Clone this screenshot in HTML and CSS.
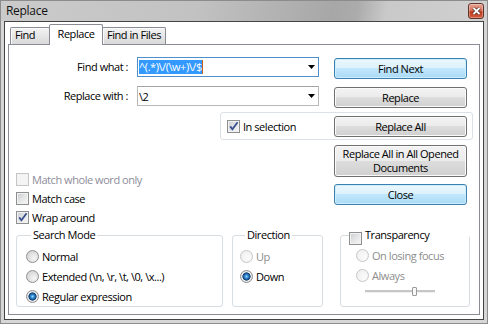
FILE: index.html
```html
<!DOCTYPE html>
<html lang="en">

<head>
    <meta charset="UTF-8">
    <meta name="viewport" content="width=device-width, initial-scale=1.0">
    <title>Replace</title>
    <link rel="stylesheet" href="styles.css">
</head>

<body>
    <div class="window">
        <header class="titlebar">
            <span class="title">Replace</span>
            <span class="close-btn">
                <svg width="9" height="8" viewBox="0 0 9 8">
                    <path d="M1.5 1 L7.5 7 M7.5 1 L1.5 7" stroke="#4a2a24" stroke-width="3.2" fill="none" />
                    <path d="M1.5 1 L7.5 7 M7.5 1 L1.5 7" stroke="#ffffff" stroke-width="1.8" fill="none" />
                </svg>
            </span>
        </header>

        <div class="client">
            <nav class="tabs">
                <span class="tab tab-find">Find</span>
                <span class="tab tab-replace active">Replace</span>
                <span class="tab tab-files">Find in Files</span>
            </nav>

            <section class="panel">
                <div class="top-grid">
                    <label class="field-label lbl-find">Find what :</label>
                    <div class="combo focused combo-find">
                        <span class="combo-text"><span class="selected-text">^(.*)\/(\w+)\/$</span><span class="caret"></span></span>
                        <span class="arrow"><svg width="7" height="4" viewBox="0 0 7 4"><path d="M0 0 H7 L3.5 4 Z" fill="#000" /></svg></span>
                    </div>
                    <button class="btn default btn-findnext">Find Next</button>

                    <label class="field-label lbl-replace">Replace with :</label>
                    <div class="combo combo-replace">
                        <span class="combo-text">\2</span>
                        <span class="arrow"><svg width="7" height="4" viewBox="0 0 7 4"><path d="M0 0 H7 L3.5 4 Z" fill="#000" /></svg></span>
                    </div>
                    <button class="btn btn-replace">Replace</button>

                    <div class="sel-box">
                        <label class="check">
                            <span class="cb checked"><svg width="13" height="13" viewBox="0 0 13 13"><path d="M3.2 6.4 L5.4 9.2 L10.6 2.2" stroke="#3b4f8f" stroke-width="1.8" fill="none" /></svg></span>
                            In selection
                        </label>
                        <button class="btn btn-replace-all">Replace All</button>
                    </div>

                    <button class="btn btn-all-docs">Replace All in All Opened Documents</button>
                    <button class="btn default btn-close">Close</button>

                    <div class="options">
                        <label class="check disabled"><span class="cb"></span>Match whole word only</label>
                        <label class="check"><span class="cb"></span>Match case</label>
                        <label class="check">
                            <span class="cb checked"><svg width="13" height="13" viewBox="0 0 13 13"><path d="M3.2 6.4 L5.4 9.2 L10.6 2.2" stroke="#3b4f8f" stroke-width="1.8" fill="none" /></svg></span>
                            Wrap around
                        </label>
                    </div>
                </div>

                <div class="groups">
                    <fieldset class="group search-mode">
                        <legend>Search Mode</legend>
                        <label class="radio"><span class="rb"></span>Normal</label>
                        <label class="radio"><span class="rb"></span>Extended (\n, \r, \t, \0, \x...)</label>
                        <label class="radio"><span class="rb on"></span>Regular expression</label>
                    </fieldset>

                    <fieldset class="group direction">
                        <legend>Direction</legend>
                        <label class="radio disabled"><span class="rb"></span>Up</label>
                        <label class="radio"><span class="rb on"></span>Down</label>
                    </fieldset>

                    <fieldset class="group transparency">
                        <legend><span class="cb"></span>Transparency</legend>
                        <label class="radio disabled"><span class="rb"></span>On losing focus</label>
                        <label class="radio disabled"><span class="rb"></span>Always</label>
                        <div class="slider"><span class="thumb"></span></div>
                    </fieldset>
                </div>
            </section>
        </div>
    </div>
</body>

</html>
```

FILE: styles.css
```css
body {
    margin: 0;
    font-family: "Open Sans", "Noto Sans", sans-serif;
    font-size: 11px;
    letter-spacing: -0.45px;
    color: #000;
    background-color: #ffffff;
}

.window {
    width: 488px;
    height: 324px;
    box-sizing: border-box;
    border: 1px solid #8c8c8c;
    background-color: #d6d6d6;
    display: flex;
    flex-direction: column;
}

/* title bar */
.titlebar {
    height: 20px;
    display: flex;
    justify-content: space-between;
    align-items: flex-start;
    padding: 0 3px 0 5px;
    background: linear-gradient(100deg, #cbcbcb 0%, #c2c2c2 40%, #b1b1b1 58%, #a7a7a7 68%, #ababab 73%, #c9c9c9 79%, #d0d0d0 100%);
}

.title {
    font-size: 12px;
    letter-spacing: -0.3px;
    line-height: 20px;
    color: #111;
}

.close-btn {
    width: 16px;
    height: 16px;
    margin-top: 2px;
    box-sizing: border-box;
    border: 1px solid #5e342c;
    border-radius: 3px;
    background: linear-gradient(#e8a594 0%, #d8745d 45%, #c23b1e 55%, #d05c3c 100%);
    box-shadow: inset 0 0 0 1px rgba(255, 255, 255, 0.3);
    display: flex;
    align-items: center;
    justify-content: center;
}

/* client area */
.client {
    flex: 1;
    margin: 0 3px 3px;
    border: 1px solid #444;
    background-color: #fff;
    display: flex;
    flex-direction: column;
}

.tabs {
    display: flex;
    align-items: flex-end;
    height: 20px;
    margin: 2px 0 0 5px;
    position: relative;
    z-index: 1;
}

.tab {
    height: 17px;
    box-sizing: border-box;
    border: 1px solid #898c95;
    border-bottom: 0;
    border-radius: 2px 2px 0 0;
    padding-left: 4px;
    line-height: 14px;
    white-space: nowrap;
    background: linear-gradient(#f4f4f4 0%, #e6e6e6 50%, #d9d9d9 100%);
    box-shadow: inset 1px 1px 0 #fbfbfb;
}

.tab-find {
    width: 40px;
}

.tab-files {
    width: 64px;
}

.tab.active {
    width: 54px;
    height: 21px;
    margin: 0 -1px -1px;
    padding-left: 0;
    text-align: center;
    line-height: 17px;
    background: #fff;
    box-shadow: none;
}

.panel {
    flex: 1;
    margin: 0 3px 4px;
    border: 1px solid #898c95;
}

/* top part: fields and buttons */
.top-grid {
    display: grid;
    grid-template-columns: 119px 9px 83px 99px 15px 133px 6px;
    grid-template-rows: 22px 7px 22px 4px 28px 5px 32px 7px 21px 22px;
    padding-top: 12px;
}

.field-label {
    text-align: right;
    line-height: 20px;
    align-self: start;
}

.lbl-find {
    grid-area: 1 / 1 / 2 / 2;
}

.lbl-replace {
    grid-area: 3 / 1 / 4 / 2;
}

.combo {
    height: 20px;
    box-sizing: border-box;
    border: 1px solid #b8b8b8;
    border-top-color: #a3a3a3;
    display: flex;
    align-items: center;
    padding-left: 1px;
}

.combo.focused {
    border-color: #4f8fca;
}

.combo-find {
    grid-area: 1 / 3 / 2 / 5;
}

.combo-replace {
    grid-area: 3 / 3 / 4 / 5;
}

.combo-text {
    flex: 1;
    display: flex;
    align-items: center;
    white-space: pre;
}

.selected-text {
    background-color: #3399ff;
    color: #fff;
    line-height: 14px;
}

.caret {
    width: 1px;
    height: 14px;
    background-color: #c2641e;
}

.arrow {
    width: 13px;
    display: flex;
    justify-content: center;
}

.btn {
    font: inherit;
    letter-spacing: inherit;
    color: #000;
    height: 21px;
    padding: 0;
    box-sizing: border-box;
    border: 1px solid #707070;
    border-radius: 3px;
    background: linear-gradient(#f3f3f3 0%, #ebebeb 49%, #dddddd 50%, #d0d0d0 100%);
    box-shadow: inset 0 0 0 1px #fbfbfb;
}

.btn.default {
    border-color: #3c7fb1;
    background: linear-gradient(#ecf7fd 0%, #dcf1fc 49%, #c1e7fd 50%, #abdaf5 100%);
    box-shadow: inset 0 0 0 1px #cdeefb;
}

.btn-findnext {
    grid-area: 1 / 6 / 2 / 7;
    margin-top: 1px;
}

.btn-replace {
    grid-area: 3 / 6 / 4 / 7;
    margin-top: 1px;
}

.btn-all-docs {
    grid-area: 7 / 6 / 8 / 7;
    height: 32px;
    line-height: 14px;
}

.btn-close {
    grid-area: 9 / 6 / 10 / 7;
}

.sel-box {
    grid-area: 5 / 4 / 6 / 8;
    border: 1px solid #dbe1e6;
    border-radius: 3px;
    display: flex;
    align-items: center;
    justify-content: space-between;
    padding: 0 5px 0 6px;
}

.btn-replace-all {
    width: 133px;
}

.options {
    grid-area: 7 / 1 / 11 / 5;
    align-self: end;
    padding-left: 7px;
}

/* checkboxes */
.check {
    display: flex;
    align-items: center;
    gap: 3px;
    height: 19px;
}

.check.disabled {
    color: #8d8d99;
}

.cb {
    width: 13px;
    height: 13px;
    flex: none;
    box-sizing: border-box;
    border: 1px solid #8e8f8f;
    background: linear-gradient(135deg, #c9cbcd 0%, #e4e5e6 50%, #f7f7f7 100%);
    box-shadow: inset 0 0 0 1px #f2f2f2;
    display: flex;
    align-items: center;
    justify-content: center;
    overflow: visible;
}

.cb svg {
    flex: none;
}

.check.disabled .cb {
    border-color: #c5c6c8;
    background: #f4f4f4;
}

/* group boxes */
.groups {
    display: flex;
    padding-left: 7px;
}

.group {
    margin: 0;
    padding: 3px 0 0;
    height: 80px;
    box-sizing: border-box;
    border: 1px solid #d8dde2;
    border-radius: 3px;
}

.group legend {
    margin-left: 5px;
    padding: 0 2px;
    line-height: 16px;
}

.search-mode {
    width: 207px;
    padding-left: 9px;
}

.direction {
    width: 91px;
    margin-left: 9px;
    padding-left: 7px;
}

.transparency {
    width: 128px;
    margin-left: 17px;
    padding-left: 15px;
    padding-top: 2px;
}

.transparency legend {
    margin-left: -7px;
    padding: 0;
    width: 120px;
    display: flex;
    align-items: center;
    gap: 3px;
}

.transparency legend .cb {
    align-self: flex-end;
    margin-bottom: -2px;
}

/* radios */
.radio {
    display: flex;
    align-items: center;
    gap: 3px;
    height: 20px;
}

.radio.disabled {
    color: #8d8d8d;
}

.rb {
    width: 13px;
    height: 13px;
    flex: none;
    box-sizing: border-box;
    border-radius: 50%;
    border: 1px solid #8e8f8f;
    background: radial-gradient(circle at 65% 65%, #f6f6f6 0%, #dedede 55%, #cdcdcd 100%);
}

.rb.on {
    background: radial-gradient(circle at 50% 50%, #9ad8ff 0, #3b94d9 1.5px, #18528f 3.2px, #0f3a6b 3.8px, #f2f2f2 4.4px, #d8d8d8 6px);
}

.radio.disabled .rb {
    border-color: #c6c6c6;
    background: radial-gradient(circle at 65% 65%, #fbfbfb 0%, #ededed 100%);
}

/* transparency slider */
.slider {
    width: 70px;
    height: 10px;
    margin: 1px 0 0 9px;
    position: relative;
    display: flex;
    align-items: center;
}

.slider::before {
    content: "";
    flex: 1;
    height: 2px;
    background-color: #c6c6c6;
    border-bottom: 1px solid #f0f0f0;
}

.slider .thumb {
    position: absolute;
    left: 47px;
    top: 1px;
    width: 5px;
    height: 9px;
    box-sizing: border-box;
    border: 1px solid #9a9a9a;
    border-radius: 1px;
    background-color: #f8f8f8;
}
```
